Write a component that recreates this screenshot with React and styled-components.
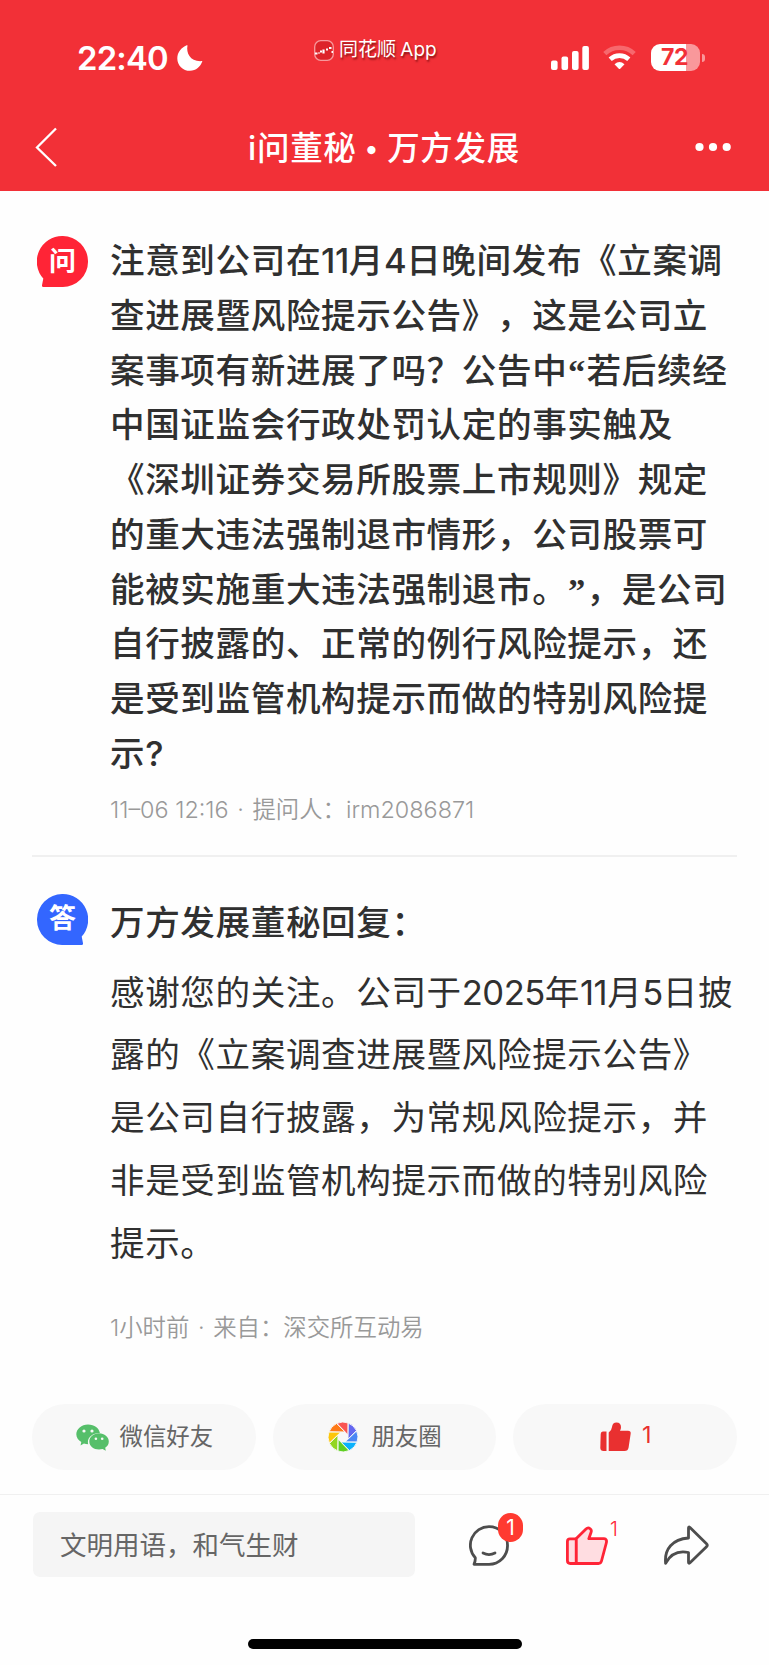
import React from "react";
import styled, { createGlobalStyle } from "styled-components";

const ink = "#303030";
const gray = "#999";

const GlobalStyle = createGlobalStyle`
  * {
    box-sizing: border-box;
  }
  body {
    margin: 0;
    background: #fefefe;
    font-family: Inter, "Noto Sans CJK SC", sans-serif;
    text-spacing-trim: space-all;
    color: ${ink};
  }
  svg {
    display: block;
    flex: none;
  }
`;

const Screen = styled.div`
  width: 769px;
  height: 1665px;
  display: flex;
  flex-direction: column;
  overflow: hidden;
`;

const Header = styled.header`
  height: 191px;
  flex: none;
  background: #f23037;
  color: #fff;
`;

const StatusBar = styled.div`
  height: 104px;
  padding: 11px 64px 0 77px;
  display: grid;
  grid-template-columns: 237px 1fr auto;
  align-items: center;
`;

const Clock = styled.div`
  display: flex;
  align-items: center;
  gap: 9px;
  font-size: 32.8px;
  font-weight: 600;
  letter-spacing: -0.8px;
  line-height: 40px;
`;

const Watermark = styled.div`
  display: flex;
  align-items: center;
  gap: 5px;
  padding-bottom: 15px;
  font-size: 19px;
  line-height: 24px;
  word-spacing: -1px;
  text-shadow: 1px 2px 2px rgba(80, 0, 0, 0.65);
  white-space: nowrap;
`;

const StatusIcons = styled.div`
  display: flex;
  align-items: center;
`;

const Battery = styled.div`
  width: 49px;
  height: 27px;
  margin-left: 15px;
  padding-right: 2px;
  border-radius: 9px;
  background: linear-gradient(to right, #fff 35px, #f9989b 35px);
  color: #f23037;
  font-size: 23px;
  font-weight: 700;
  line-height: 27px;
  text-align: center;
  letter-spacing: -0.5px;
`;

const BatteryTip = styled.div`
  width: 3px;
  height: 8px;
  margin-left: 2px;
  border-radius: 0 4px 4px 0;
  background: #f9989b;
`;

const NavBar = styled.div`
  height: 87px;
  padding: 0 38px 1px 35px;
  display: flex;
  align-items: center;
`;

const Title = styled.h1`
  flex: 1;
  margin: 0;
  padding: 4px 0 0 15px;
  font-size: 32.5px;
  font-weight: 500;
  line-height: 44px;
  letter-spacing: 0.7px;
  text-align: center;
  white-space: nowrap;
`;

const TitleDot = styled.span`
  margin: 0 8px;
  font-size: 26px;
  line-height: 1;
  vertical-align: 2px;
`;

const Entry = styled.section`
  margin: 0 32px;
  padding: ${p => p.$padding};
  display: flex;
  align-items: flex-start;
  border-bottom: ${p => (p.$divided ? "2px solid #f0f0f0" : "none")};
`;

const Bubble = styled.div`
  width: 51px;
  height: 51px;
  flex: none;
  margin: ${p => p.$top}px 22px 0 5px;
  display: grid;
  place-items: center;
  svg,
  span {
    grid-area: 1 / 1;
  }
  span {
    color: #fff;
    font-size: 27px;
    font-weight: 700;
    line-height: 48px;
    z-index: 1;
  }
`;

const Body = styled.div`
  flex: 1;
  min-width: 0;
`;

const Question = styled.h2`
  margin: 0;
  font-size: 34.6px;
  font-weight: 500;
  line-height: 54.75px;
  letter-spacing: 0.6px;
`;

const Line = styled.span`
  display: block;
  white-space: nowrap;
`;

const Digits = styled.span`
  letter-spacing: -0.5px;
`;

const Quote = styled.span`
  padding: 0 0.7px;
  font-family: "Liberation Serif", serif;
  font-weight: 700;
  line-height: 1;
`;

const Responder = styled.h2`
  margin: 3px 0 14px;
  font-size: 34.6px;
  font-weight: 500;
  line-height: 50px;
  letter-spacing: 0.6px;
`;

const Answer = styled.p`
  margin: 0;
  font-size: 34.6px;
  line-height: 62.8px;
  letter-spacing: 0.6px;
`;

const Meta = styled.div`
  margin-top: ${p => p.$top}px;
  color: ${gray};
  font-size: 23.4px;
  font-weight: 350;
  line-height: 30px;
  white-space: nowrap;
`;

const Dot = styled.span`
  margin: 0 2px;
`;

const ShareRow = styled.div`
  margin: 61px 32px 24px;
  display: grid;
  grid-template-columns: repeat(3, 1fr);
  gap: 17px;
`;

const Pill = styled.button`
  height: 66px;
  padding: 0 0 5px 1px;
  display: flex;
  align-items: center;
  justify-content: center;
  gap: ${p => p.$gap || 11}px;
  border: 0;
  border-radius: 33px;
  background: #f8f8f8;
  color: ${p => (p.$active ? "#e93030" : "#666")};
  font: inherit;
  font-size: 23.4px;
  svg {
    margin-top: 5px;
  }
`;

const Footer = styled.footer`
  flex: 1;
  border-top: 1px solid #f0f0f0;
  display: flex;
  flex-direction: column;
  align-items: center;
`;

const ActionBar = styled.div`
  width: 100%;
  padding: 17px 60px 0 33px;
  display: flex;
  align-items: center;
`;

const Input = styled.div`
  width: 383px;
  height: 65px;
  padding: 1px 27px 0;
  border-radius: 7px;
  background: #f5f5f5;
  color: #666;
  font-size: 26.5px;
  line-height: 64px;
  white-space: nowrap;
`;

const Action = styled.div`
  position: relative;
  margin: 1px 0 0 ${p => p.$left}px;
`;

const Count = styled.span`
  position: absolute;
  left: 29px;
  top: -12px;
  width: 25px;
  height: 29px;
  border-radius: 13px;
  background: #ff3a30;
  color: #fff;
  font-size: 21px;
  line-height: 29px;
  text-align: center;
`;

const LikeCount = styled.span`
  position: absolute;
  left: 44px;
  top: -7px;
  color: #ff2436;
  font-size: 20px;
  font-weight: 300;
  line-height: 20px;
`;

const HomeIndicator = styled.div`
  width: 274px;
  height: 10px;
  margin: auto 0 16px;
  border-radius: 5px;
  background: #000;
`;

const questionLines = [
  "注意到公司在11月4日晚间发布《立案调",
  "查进展暨风险提示公告》，这是公司立",
  "案事项有新进展了吗？公告中“若后续经",
  "中国证监会行政处罚认定的事实触及",
  "《深圳证券交易所股票上市规则》规定",
  "的重大违法强制退市情形，公司股票可",
  "能被实施重大违法强制退市。”，是公司",
  "自行披露的、正常的例行风险提示，还",
  "是受到监管机构提示而做的特别风险提",
  "示?"
];

const answerLines = [
  "感谢您的关注。公司于2025年11月5日披",
  "露的《立案调查进展暨风险提示公告》",
  "是公司自行披露，为常规风险提示，并",
  "非是受到监管机构提示而做的特别风险",
  "提示。"
];

const Moon = () => (
  <svg width="26" height="26" viewBox="0 0 26 26" fill="#fff">
    <path d="M10.500.6C8.900 8.600 13.500 17.200 25.400 16.100 23.600 21.800 18.900 25.800 13 25.800 5.900 25.800.3 20.300.3 13.400.3 7.400 4.300 2.500 9.700.3q1-.3.8.3z" />
  </svg>
);

const AppLogo = () => (
  <svg width="20" height="21" viewBox="0 0 20 21">
    <rect x=".7" y=".7" width="18.600" height="19.600" rx="6" fill="#dd2329" stroke="#f7999c" strokeWidth="1.300" />
    <path d="M1 13.500h2.500M4.500 13h1M6 11.500h2M9.500 9.500v4M12 9.500h2M15 8h2.500M17.500 12h1.500" stroke="#fff" strokeWidth="2.200" />
  </svg>
);

const Signal = () => (
  <svg width="38" height="24" viewBox="0 0 38 24" fill="#fff">
    <rect x="0" y="14.500" width="6.600" height="9.500" rx="2" />
    <rect x="10.500" y="10.500" width="6.600" height="13.500" rx="2" />
    <rect x="21" y="5" width="6.600" height="19" rx="2" />
    <rect x="31.300" y="0" width="6.600" height="24" rx="2" />
  </svg>
);

const WifiSvg = styled.svg`
  margin-left: 14px;
`;

const Wifi = () => (
  <WifiSvg width="33" height="25" viewBox="0 0 33 25">
    <path d="M1.800 8.600a21.500 21.500 0 0 1 29.400 0" fill="none" stroke="#f7686d" strokeWidth="4.600" />
    <path d="M7.200 14.300a13.600 13.600 0 0 1 18.600 0" fill="none" stroke="#fff" strokeWidth="4.600" />
    <path d="M11.500 19.200q5-4.200 10 0L17.200 23.700q-.7.700-1.400 0z" fill="#fff" />
  </WifiSvg>
);

const Back = () => (
  <svg width="23" height="40" viewBox="0 0 23 40" fill="none" stroke="#fff" strokeWidth="2.300">
    <path d="M21 1.500 2 20.500l19 18.500" />
  </svg>
);

const More = () => (
  <svg width="36" height="10" viewBox="0 0 36 10" fill="#fff">
    <circle cx="4.500" cy="5" r="4.100" />
    <circle cx="18" cy="5" r="4.100" />
    <circle cx="31.700" cy="5" r="4.100" />
  </svg>
);

const BubbleShape = ({ color, flip }) => (
  <svg width="51" height="51" viewBox="0 0 51 51" fill={color}>
    <path
      transform={flip ? "matrix(-1 0 0 1 51 0)" : undefined}
      d="M25.500 0A25.300 25.300 0 0 1 51 25.500 25.300 25.300 0 0 1 25.500 51H6.500Q4.600 51 5 49.200L6.300 42.500A25.500 25.500 0 0 1 25.500 0z"
    />
  </svg>
);

const WeChat = () => (
  <svg width="33" height="27" viewBox="0 0 33 27" fill="#56bf6a">
    <path d="M12 .4c6.500 0 11.300 3.900 11.900 8.700-6.600-.3-12 3.900-12 9.200 0 .7.1 1.300.3 1.900-1.600 0-3-.1-4.300-.6L4.500 21.500l.8-3.400C2.300 16.300.3 13.500.3 10.300.3 4.900 5.500.4 12 .4z" />
    <path d="M23 9.300c5.500 0 9.800 3.700 9.800 8.200 0 2.700-1.400 4.900-3.600 6.300l.6 2.900-3.200-1.600c-1.200.3-2.300.4-3.600.4-5.500 0-9.700-3.500-9.700-8s4.200-8.200 9.700-8.200z" />
    <g fill="#f8f8f8">
      <circle cx="8" cy="7" r="1.600" />
      <circle cx="16" cy="7" r="1.600" />
      <circle cx="19.900" cy="14.700" r="1.300" />
      <circle cx="26.200" cy="14.700" r="1.300" />
    </g>
  </svg>
);

const blades = ["#fa5452", "#6467ef", "#4a86f5", "#0ab1fc", "#5fcf22", "#93d61f", "#fdc60a", "#ff7a17"];

const Moments = () => (
  <svg width="30" height="30" viewBox="-15 -15 30 30">
    {blades.map((color, i) => (
      <path
        key={color}
        transform={`rotate(${i * 45})`}
        d="M-6.100-13.600A15 15 0 0 1 5-14.100V-2.100z"
        fill={color}
        stroke="#f8f8f8"
        strokeWidth=".9"
      />
    ))}
  </svg>
);

const LikeSolid = () => (
  <svg width="31" height="30" viewBox="0 0 31 30" fill="#e93030">
    <path d="M2.800 9.500H6.500V29H3.500Q.4 29 .3 26L.7 12Q.8 9.500 2.800 9.500z" />
    <path d="M8.700 29V10.500Q11.500 9 12 5 12.600.6 16.500.6 21 .6 21 5.300 21 7 20 8.700H28Q31 8.700 30.700 11.500L28.600 25.500Q28 29 24.500 29z" />
  </svg>
);

const Comment = () => (
  <svg width="40" height="41" viewBox="0 0 40 41" fill="none" stroke="#4d4d4d" strokeWidth="2.800">
    <path d="M20 1.600A18.500 18.500 0 0 1 38.500 20.300 18.500 18.500 0 0 1 20 39.300H5Q6.500 36 6.300 32.800A18.600 18.600 0 0 1 20 1.600z" strokeLinejoin="round" />
    <path d="M14 28q6 3.200 12 0" strokeLinecap="round" />
  </svg>
);

const LikeOutline = () => (
  <svg width="42" height="39" viewBox="0 0 42 39" fill="#ffdde1" stroke="#ff2436" strokeWidth="2.800" strokeLinejoin="round">
    <path d="M10.300 12.800H4Q1.400 12.800 1.400 15.500V34.500Q1.400 37.500 4.300 37.500H10.300z" />
    <path d="M10.300 37.500V12.500L20 3Q22 1 24 2.600 26 4 25 6.500L22.800 12.700H38Q41.300 13 40.300 17L35.500 35Q34.800 37.500 32.500 37.500z" />
  </svg>
);

const Share = () => (
  <svg width="46" height="41" viewBox="0 0 46 41" fill="none" stroke="#4d4d4d" strokeWidth="2.800" strokeLinejoin="round">
    <path d="M25.500 3Q25.500 1.300 27 2.500L43.500 18.800Q45 20.300 43.500 21.800L27 37.700Q25.500 39 25.500 37.300V27.500C16 25.500 7.500 29 2.600 38.300 1.200 24 9.500 14.200 25.500 13z" />
  </svg>
);

// digits and curly quotes are set a little differently from the CJK text around them
const renderPart = (part, i) => {
  if (/\d/.test(part)) return <Digits key={i}>{part}</Digits>;
  if (/[“”]/.test(part)) return <Quote key={i}>{part}</Quote>;
  return part;
};

const Lines = ({ items }) =>
  items.map(text => <Line key={text}>{text.split(/(\d+|[“”])/).map(renderPart)}</Line>);

function App() {
  return (
    <Screen>
      <GlobalStyle />
      <Header>
        <StatusBar>
          <Clock>
            22:40
            <Moon />
          </Clock>
          <Watermark>
            <AppLogo />
            同花顺 App
          </Watermark>
          <StatusIcons>
            <Signal />
            <Wifi />
            <Battery>72</Battery>
            <BatteryTip />
          </StatusIcons>
        </StatusBar>
        <NavBar>
          <Back />
          <Title>
            i问董秘
            <TitleDot>•</TitleDot>
            万方发展
          </Title>
          <More />
        </NavBar>
      </Header>

      <Entry $padding="42px 0 30px" $divided>
        <Bubble $top={3}>
          <BubbleShape color="#ff2436" />
          <span>问</span>
        </Bubble>
        <Body>
          <Question>
            <Lines items={questionLines} />
          </Question>
          <Meta $top={14}>
            11–06 12:16 <Dot>·</Dot> 提问人：irm2086871
          </Meta>
        </Body>
      </Entry>

      <Entry $padding="37px 0 0">
        <Bubble $top={0}>
          <BubbleShape color="#3366ff" flip />
          <span>答</span>
        </Bubble>
        <Body>
          <Responder>万方发展董秘回复：</Responder>
          <Answer>
            <Lines items={answerLines} />
          </Answer>
          <Meta $top={39}>
            1小时前 <Dot>·</Dot> 来自：深交所互动易
          </Meta>
        </Body>
      </Entry>

      <ShareRow>
        <Pill>
          <WeChat />
          微信好友
        </Pill>
        <Pill $gap={13}>
          <Moments />
          朋友圈
        </Pill>
        <Pill $active>
          <LikeSolid />
          1
        </Pill>
      </ShareRow>

      <Footer>
        <ActionBar>
          <Input>文明用语，和气生财</Input>
          <Action $left={54}>
            <Comment />
            <Count>1</Count>
          </Action>
          <Action $left={57}>
            <LikeOutline />
            <LikeCount>1</LikeCount>
          </Action>
          <Action $left={55}>
            <Share />
          </Action>
        </ActionBar>
        <HomeIndicator />
      </Footer>
    </Screen>
  );
}

export default App;
